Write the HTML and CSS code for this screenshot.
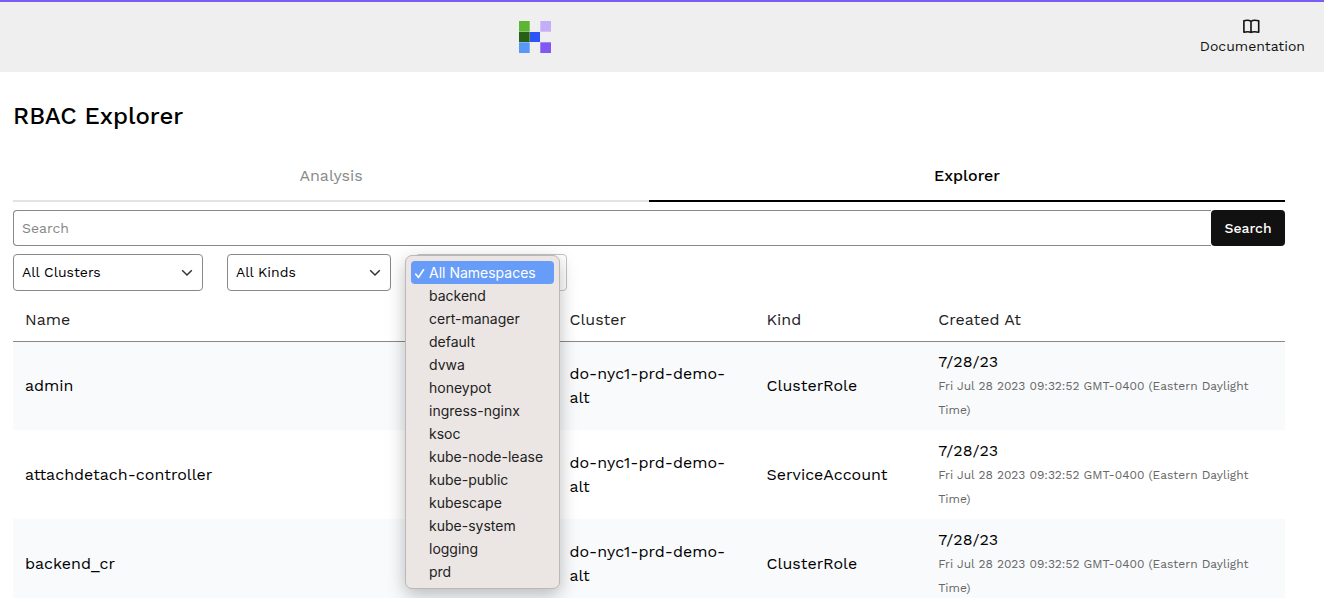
FILE: index.html
```html
<!DOCTYPE html>
<html lang="en">
<head>
<meta charset="utf-8">
<meta name="viewport" content="width=device-width, initial-scale=1">
<title>RBAC Explorer</title>
<link rel="stylesheet" href="styles.css">
</head>
<body>
<header class="topbar">
  <a class="logo" href="#" aria-label="Home">
    <svg width="32" height="32" viewBox="0 0 32 32" aria-hidden="true">
      <rect width="11" height="11" fill="#5cb634"/>
      <rect y="11" width="11" height="10" fill="#285f17"/>
      <rect y="21" width="11" height="11" fill="#5899f8"/>
      <rect x="11" y="11" width="10" height="10" fill="#2f54f5"/>
      <rect x="21" width="11" height="11" fill="#c3aefa"/>
      <rect x="21" y="21" width="11" height="11" fill="#8158f3"/>
      <path d="M10.500 0v32M0 10.500h21M0 21.500h21M21.500 0v11M21.500 21v11M21 10.500h11M21 21.500h11" stroke="#efefef" stroke-opacity=".3" fill="none"/>
    </svg>
  </a>
  <a class="docs" href="#">
    <svg width="18" height="16" viewBox="0 0 18 16" fill="none" stroke="#111" stroke-width="1.600" stroke-linejoin="round" stroke-linecap="round" aria-hidden="true">
      <path d="M8 3.400C6.500 2.100 3.300 2.100 0.900 2.700V14.200C3.300 13.600 6.500 13.600 8 14.400C9.500 13.600 12.700 13.600 15.700 14.200V2.700C12.700 2.100 9.500 2.100 8 3.400ZM8 3.400V14.400"/>
    </svg>
    <span>Documentation</span>
  </a>
</header>
<main class="page">
  <h1 class="title">RBAC Explorer</h1>
  <div class="tabs" role="tablist">
    <button class="tab" type="button" role="tab" aria-selected="false">Analysis</button>
    <button class="tab tab-active" type="button" role="tab" aria-selected="true">Explorer</button>
  </div>
  <form class="search">
    <input class="search-input" type="text" placeholder="Search" aria-label="Search">
    <button class="search-button" type="button">Search</button>
  </form>
  <div class="filters">
    <div class="filter filter-clusters">
      <select class="select" aria-label="Cluster"><option>All Clusters</option></select>
      <svg class="chevron" width="12" height="8" viewBox="0 0 12 8" aria-hidden="true"><path d="M1.200 1.200L6 6L10.800 1.200"/></svg>
    </div>
    <div class="filter filter-kinds">
      <select class="select" aria-label="Kind"><option>All Kinds</option></select>
      <svg class="chevron" width="12" height="8" viewBox="0 0 12 8" aria-hidden="true"><path d="M1.200 1.200L6 6L10.800 1.200"/></svg>
    </div>
    <div class="filter filter-namespaces">
      <select class="select select-open" aria-label="Namespace"><option></option></select>
      <ul class="menu" role="listbox" aria-label="Namespaces">
        <li class="option option-selected" role="option" aria-selected="true"><svg class="check" width="12" height="12" viewBox="0 0 12 12" aria-hidden="true"><path d="M1.800 7.200L4.500 10.400L9.500 2.800"/></svg>All Namespaces</li>
        <li class="option" role="option">backend</li>
        <li class="option" role="option">cert-manager</li>
        <li class="option" role="option">default</li>
        <li class="option" role="option">dvwa</li>
        <li class="option" role="option">honeypot</li>
        <li class="option" role="option">ingress-nginx</li>
        <li class="option" role="option">ksoc</li>
        <li class="option" role="option">kube-node-lease</li>
        <li class="option" role="option">kube-public</li>
        <li class="option" role="option">kubescape</li>
        <li class="option" role="option">kube-system</li>
        <li class="option" role="option">logging</li>
        <li class="option" role="option">prd</li>
      </ul>
    </div>
  </div>
  <table class="table">
    <colgroup><col class="col-name"><col class="col-cluster"><col class="col-kind"><col></colgroup>
    <thead>
      <tr><th>Name</th><th>Cluster</th><th>Kind</th><th>Created At</th></tr>
    </thead>
    <tbody>
      <tr>
        <td>admin</td><td>do-nyc1-prd-demo-alt</td><td>ClusterRole</td>
        <td><div class="date">7/28/23</div><div class="stamp">Fri Jul 28 2023 09:32:52 GMT-0400 (Eastern Daylight Time)</div></td>
      </tr>
      <tr>
        <td>attachdetach-controller</td><td>do-nyc1-prd-demo-alt</td><td>ServiceAccount</td>
        <td><div class="date">7/28/23</div><div class="stamp">Fri Jul 28 2023 09:32:52 GMT-0400 (Eastern Daylight Time)</div></td>
      </tr>
      <tr>
        <td>backend_cr</td><td>do-nyc1-prd-demo-alt</td><td>ClusterRole</td>
        <td><div class="date">7/28/23</div><div class="stamp">Fri Jul 28 2023 09:32:52 GMT-0400 (Eastern Daylight Time)</div></td>
      </tr>
    </tbody>
  </table>
</main>
</body>
</html>
```
FILE: styles.css
```css
* {
  box-sizing: border-box;
}

html {
  scrollbar-width: none;
}

body {
  margin: 0;
  background: #fff;
  color: #000;
  font-family: "Work Sans", Inter, sans-serif;
  font-size: 16px;
  line-height: 24px;
}

button,
input,
select {
  font-family: inherit;
}

.topbar {
  display: grid;
  grid-template-columns: 2fr 32px 3fr;
  align-items: center;
  height: 72px;
  padding: 0 19px 0 17px;
  border-top: 2px solid #7b5cf5;
  background: #efefef;
}

.logo {
  grid-column: 2;
  height: 32px;
}

.logo svg {
  display: block;
}

.docs {
  display: flex;
  flex-direction: column;
  align-items: center;
  justify-self: end;
  gap: 2px;
  color: #111;
  font-size: 14px;
  line-height: 20px;
  text-decoration: none;
}

.page {
  padding: 28px 39px 0 13px;
}

.title {
  margin: 0;
  font-size: 24px;
  font-weight: 500;
  line-height: 32px;
}

.tabs {
  display: grid;
  grid-template-columns: 1fr 1fr;
  margin-top: 18px;
}

.tab {
  padding: 14px 12px 12px;
  border: 0;
  border-bottom: 2px solid #e3e3e3;
  background: none;
  color: #888;
  font-size: 16px;
  line-height: 24px;
}

.tab-active {
  border-color: #000;
  color: #000;
  font-weight: 500;
}

.search {
  display: flex;
  height: 36px;
  margin-top: 8px;
}

.search-input {
  flex: 1;
  min-width: 0;
  padding: 0 8px;
  border: 1px solid #888;
  border-right: 0;
  border-radius: 4px 0 0 4px;
  font-size: 14px;
}

.search-input::placeholder {
  color: #888;
}

.search-button {
  width: 74px;
  padding: 0;
  border: 0;
  border-radius: 4px;
  background: #111;
  color: #fff;
  font-size: 14px;
  font-weight: 500;
}

.filters {
  display: flex;
  gap: 24px;
  margin: 8px 0 7px;
}

.filter {
  position: relative;
  height: 37px;
}

.filter-clusters {
  width: 190px;
}

.filter-kinds {
  width: 164px;
}

.filter-namespaces {
  width: 152px;
}

.select {
  appearance: none;
  width: 100%;
  height: 100%;
  padding: 0 8px 2px;
  border: 1px solid #888;
  border-radius: 4px;
  background: #fff;
  color: #000;
  font-size: 14px;
}

.select-open {
  border-color: #c4c4c4;
}

.chevron {
  position: absolute;
  top: 15px;
  right: 10px;
  fill: none;
  stroke: #333;
  stroke-width: 1.5;
  pointer-events: none;
}

.menu {
  position: absolute;
  top: 1px;
  left: -10px;
  z-index: 1;
  width: 155px;
  margin: 0;
  padding: 5px;
  border: 1px solid #bcb8b7;
  border-radius: 7px;
  background: #ebe6e4;
  box-shadow: 0 6px 18px rgba(0, 0, 0, 0.26);
  color: #222;
  font-family: Inter, sans-serif;
  font-size: 14px;
  line-height: 23px;
  list-style: none;
}

.option {
  position: relative;
  padding-left: 18px;
  border-radius: 4px;
  white-space: nowrap;
}

.option-selected {
  background: #679cf8;
  color: #fff;
}

.check {
  position: absolute;
  top: 6px;
  left: 3px;
  fill: none;
  stroke: #fff;
  stroke-width: 1.7;
  stroke-linecap: round;
  stroke-linejoin: round;
}

.table {
  width: 100%;
  table-layout: fixed;
  border-collapse: separate;
  border-spacing: 0;
}

.col-name {
  width: 42.8%;
}

.col-cluster {
  width: 15.5%;
}

.col-kind {
  width: 13.5%;
}

.table th {
  padding: 10px 12px 9px;
  border-bottom: 1px solid #888;
  color: #222;
  font-weight: 400;
  text-align: left;
}

.table td {
  padding: 8px 12px;
  border-bottom: 1px solid #f8fafc;
}

.table tbody tr:nth-child(odd) td {
  border-color: #fff;
  background: #f8fafc;
}

.stamp {
  color: #666;
  font-size: 12px;
}
```
